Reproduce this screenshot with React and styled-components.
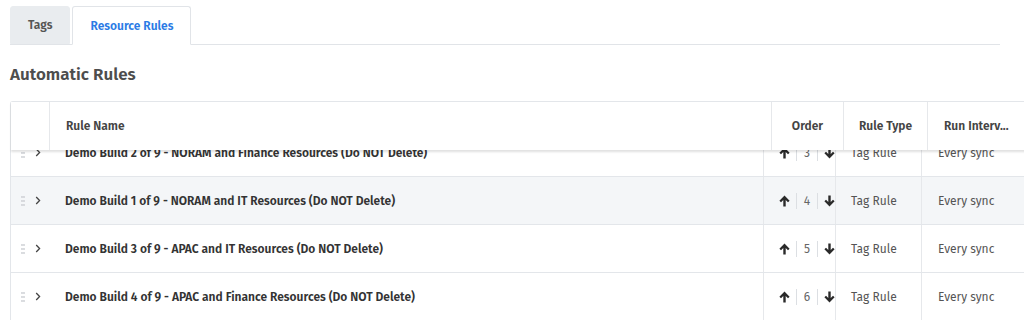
import React, { useEffect, useRef } from "react";
import styled, { createGlobalStyle } from "styled-components";

const Global = createGlobalStyle`
  html, body { margin: 0; padding: 0; background: #fff; }
  body { font-family: "Fira Sans", "Noto Sans", "Open Sans", sans-serif; color: #333; overflow: hidden; }
  * { box-sizing: border-box; }
`;

const Page = styled.div`
  padding: 6px 0 0 10px;
  width: 1024px;
  height: 327px;
  overflow: hidden;
`;

const TabStrip = styled.div`
  display: flex;
  align-items: flex-end;
  gap: 2px;
  width: 990px;
  border-bottom: 1px solid #e1e4e8;
  height: 39px;
`;

const Tab = styled.div`
  height: ${(p) => (p.$active ? "39px" : "38px")};
  margin-bottom: ${(p) => (p.$active ? "-1px" : "0")};
  padding: 0 17px;
  display: flex;
  align-items: center;
  font-size: 12px;
  font-weight: 600;
  color: ${(p) => (p.$active ? "#2b7be5" : "#555")};
  background: ${(p) => (p.$active ? "#fff" : "#e9ecef")};
  border: 1px solid ${(p) => (p.$active ? "#e1e4e8" : "#e9ecef")};
  border-bottom-color: ${(p) => (p.$active ? "#fff" : "#e9ecef")};
  border-radius: 3px 3px 0 0;
`;

const Heading = styled.h2`
  margin: 20px 0 0;
  font-size: 17px;
  font-weight: 600;
  color: #4d4d4d;
  line-height: 20px;
`;

const Table = styled.div`
  margin-top: 16px;
  width: 1100px;
  border-left: 1px solid #e3e6ea;
  border-top: 1px solid #e3e6ea;
  border-radius: 3px 0 0 0;
`;

const HeaderRow = styled.div`
  display: grid;
  grid-template-columns: 39px 722px 72px 84px 1fr;
  height: 48px;
  background: #fff;
  box-shadow: 0 2px 2px rgba(0, 0, 0, 0.12);
  position: relative;
  z-index: 1;
`;

const HeadCell = styled.div`
  display: flex;
  align-items: center;
  justify-content: ${(p) => (p.$center ? "center" : "flex-start")};
  padding-left: ${(p) => (p.$center ? "0" : p.$pad || "16px")};
  font-size: 12px;
  font-weight: 600;
  color: #444;
  border-right: 1px solid #e6e8eb;
  white-space: nowrap;
`;

const Body = styled.div`
  height: 170px;
  overflow: hidden;
`;

const Row = styled.div`
  display: grid;
  grid-template-columns: 54px 699px 72px 86px 1fr;
  height: 48px;
  background: ${(p) => (p.$alt ? "#f4f6f8" : "#fff")};
  border-bottom: 1px solid #e3e6ea;
`;

const Cell = styled.div`
  display: flex;
  align-items: center;
  font-size: 12px;
  color: #555;
  border-right: ${(p) => (p.$line ? "1px solid #e6e8eb" : "none")};
  padding-left: ${(p) => p.$pad || "0"};
  white-space: nowrap;
`;

const Handle = styled.div`
  display: flex;
  align-items: center;
  gap: 10px;
  padding-left: 10px;
`;

const Name = styled(Cell)`
  font-weight: 600;
  color: #333;
`;

const OrderBox = styled(Cell)`
  gap: 6px;
  padding-left: 15px;
  color: #666;
`;

const Sep = styled.span`
  width: 1px;
  height: 16px;
  background: #dcdfe3;
`;

const Num = styled.span`
  width: 8px;
  text-align: center;
`;

const Dots = () => (
  <svg width="4" height="10" viewBox="0 0 4 10">
    {[1, 5, 9].map((y) => (
      <React.Fragment key={y}>
        <circle cx="1" cy={y} r="0.9" fill="#c9ccd1" />
        <circle cx="3" cy={y} r="0.9" fill="#c9ccd1" />
      </React.Fragment>
    ))}
  </svg>
);

const Chevron = () => (
  <svg width="6" height="9" viewBox="0 0 6 9">
    <path d="M1.2 1 L4.6 4.5 L1.2 8" fill="none" stroke="#444" strokeWidth="1.3" />
  </svg>
);

const Up = () => (
  <svg width="11" height="12" viewBox="0 0 11 12">
    <path d="M5.5 0.6 L10.6 5.7 L9 7.2 L6.7 4.9 L6.7 11.4 L4.3 11.4 L4.3 4.9 L2 7.2 L0.4 5.7 Z" fill="#2a2a2a" />
  </svg>
);

const Down = () => (
  <svg width="11" height="12" viewBox="0 0 11 12">
    <path d="M5.5 11.4 L10.6 6.3 L9 4.8 L6.7 7.1 L6.7 0.6 L4.3 0.6 L4.3 7.1 L2 4.8 L0.4 6.3 Z" fill="#2a2a2a" />
  </svg>
);

const rows = [
  { name: "Demo Build 2 of 9 - NORAM and Finance Resources (Do NOT Delete)", order: 3 },
  { name: "Demo Build 1 of 9 - NORAM and IT Resources (Do NOT Delete)", order: 4, alt: true },
  { name: "Demo Build 3 of 9 - APAC and IT Resources (Do NOT Delete)", order: 5 },
  { name: "Demo Build 4 of 9 - APAC and Finance Resources (Do NOT Delete)", order: 6 },
];

export default function App() {
  const bodyRef = useRef(null);
  useEffect(() => {
    if (bodyRef.current) bodyRef.current.scrollTop = 21;
  }, []);
  return (
    <>
      <Global />
      <Page>
        <TabStrip>
          <Tab>Tags</Tab>
          <Tab $active>Resource Rules</Tab>
        </TabStrip>
        <Heading>Automatic Rules</Heading>
        <Table>
          <HeaderRow>
            <HeadCell />
            <HeadCell>Rule Name</HeadCell>
            <HeadCell $center>Order</HeadCell>
            <HeadCell $center>Rule Type</HeadCell>
            <HeadCell $pad="16px">Run Interv...</HeadCell>
          </HeaderRow>
          <Body ref={bodyRef}>
            {rows.map((r) => (
              <Row key={r.order} $alt={r.alt}>
                <Cell>
                  <Handle>
                    <Dots />
                    <Chevron />
                  </Handle>
                </Cell>
                <Name $line>{r.name}</Name>
                <OrderBox $line>
                  <Up />
                  <Sep />
                  <Num>{r.order}</Num>
                  <Sep />
                  <Down />
                </OrderBox>
                <Cell $line $pad="15px">Tag Rule</Cell>
                <Cell $pad="16px">Every sync</Cell>
              </Row>
            ))}
          </Body>
        </Table>
      </Page>
    </>
  );
}
